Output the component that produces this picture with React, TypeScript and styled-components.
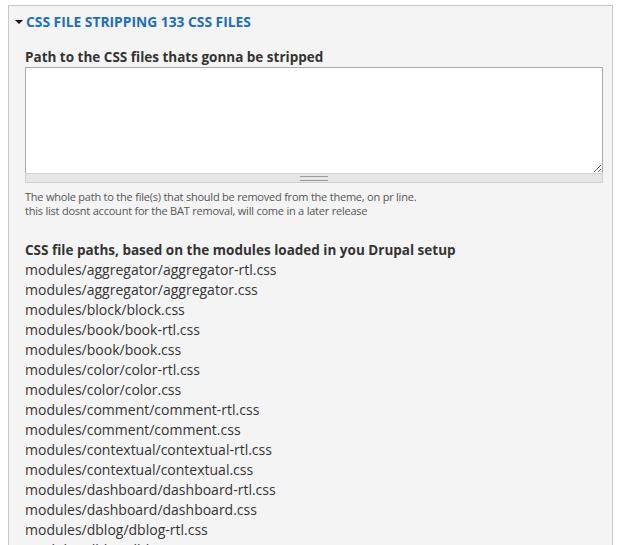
import React from "react";
import styled, { createGlobalStyle } from "styled-components";

const Global = createGlobalStyle`
  html, body { margin: 0; padding: 0; background: #fff; }
  body { font-family: "Open Sans", "DejaVu Sans", sans-serif; color: #333; }
`;

const Page = styled.div`
  padding: 5px 7px 0 8px;
  height: 545px;
  box-sizing: border-box;
  overflow: hidden;
`;

const Fieldset = styled.section`
  border: 1px solid #c8c8c8;
  background: #f4f4f4;
  width: 605px;
  box-sizing: border-box;
  min-height: 600px;
`;

const Legend = styled.div`
  display: flex;
  align-items: center;
  height: 30px;
  padding-left: 6px;
  gap: 3px;
`;

const Arrow = styled.span`
  width: 0;
  height: 0;
  border-left: 4px solid transparent;
  border-right: 4px solid transparent;
  border-top: 4px solid #000;
  margin-top: 1px;
`;

const LegendLink = styled.a`
  color: #1d6fba;
  font-weight: 700;
  font-size: 13.8px;
  text-transform: uppercase;
  text-decoration: none;
`;

const Body = styled.div`
  padding: 12px 10px 0 16px;
`;

const Label = styled.label`
  display: block;
  font-weight: 700;
  font-size: 13.5px;
  line-height: 18px;
  margin-bottom: 1px;
`;

const TextareaWrap = styled.div`
  width: 578px;
`;

const Textarea = styled.textarea`
  display: block;
  width: 100%;
  height: 106px;
  box-sizing: border-box;
  border: 1px solid #aaaaaa;
  border-bottom: none;
  background: #fff;
  margin: 0;
  resize: vertical;
  font-family: inherit;
`;

const Grippie = styled.div`
  height: 10px;
  box-sizing: border-box;
  border: 1px solid #cfcfcf;
  background: #e6e6e6;
  display: flex;
  align-items: center;
  justify-content: center;
`;

const GripLines = styled.span`
  width: 28px;
  height: 3px;
  border-top: 1px solid #9a9a9a;
  border-bottom: 1px solid #9a9a9a;
`;

const Description = styled.div`
  font-size: 11px;
  letter-spacing: -0.22px;
  line-height: 14px;
  color: #555;
  margin-top: 7px;
`;

const ListTitle = styled.div`
  font-weight: 700;
  font-size: 13.5px;
  line-height: 20px;
  margin-top: 22px;
`;

const Path = styled.div`
  font-size: 14px;
  line-height: 20px;
  color: #333;
`;

const paths = [
  "modules/aggregator/aggregator-rtl.css",
  "modules/aggregator/aggregator.css",
  "modules/block/block.css",
  "modules/book/book-rtl.css",
  "modules/book/book.css",
  "modules/color/color-rtl.css",
  "modules/color/color.css",
  "modules/comment/comment-rtl.css",
  "modules/comment/comment.css",
  "modules/contextual/contextual-rtl.css",
  "modules/contextual/contextual.css",
  "modules/dashboard/dashboard-rtl.css",
  "modules/dashboard/dashboard.css",
  "modules/dblog/dblog-rtl.css",
  "modules/dblog/dblog.css",
];

export default function App() {
  return (
    <>
      <Global />
      <Page>
        <Fieldset>
          <Legend>
            <Arrow />
            <LegendLink href="#">CSS file stripping 133 CSS files</LegendLink>
          </Legend>
          <Body>
            <Label>Path to the CSS files thats gonna be stripped</Label>
            <TextareaWrap>
              <Textarea />
              <Grippie>
                <GripLines />
              </Grippie>
            </TextareaWrap>
            <Description>
              The whole path to the file(s) that should be removed from the theme, on pr line.
              <br />
              this list dosnt account for the BAT removal, will come in a later release
            </Description>
            <ListTitle>CSS file paths, based on the modules loaded in you Drupal setup</ListTitle>
            {paths.map((p) => (
              <Path key={p}>{p}</Path>
            ))}
          </Body>
        </Fieldset>
      </Page>
    </>
  );
}
